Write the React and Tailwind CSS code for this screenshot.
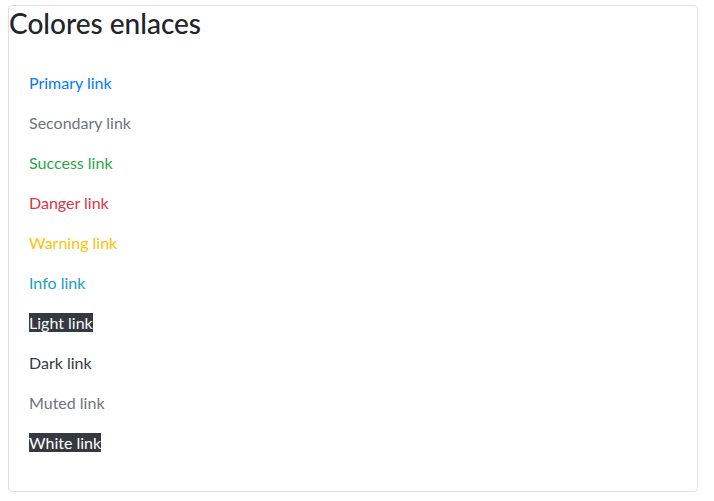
import React from 'react';

const links = [
  { label: 'Primary link', cls: 'text-[#007bff]' },
  { label: 'Secondary link', cls: 'text-[#6c757d]' },
  { label: 'Success link', cls: 'text-[#28a745]' },
  { label: 'Danger link', cls: 'text-[#dc3545]' },
  { label: 'Warning link', cls: 'text-[#ffc107]' },
  { label: 'Info link', cls: 'text-[#17a2b8]' },
  { label: 'Light link', cls: 'text-[#f8f9fa] bg-[#343a40]' },
  { label: 'Dark link', cls: 'text-[#343a40]' },
  { label: 'Muted link', cls: 'text-[#6c757d]' },
  { label: 'White link', cls: 'text-white bg-[#343a40]' },
];

export default function App() {
  return (
    <div className="min-h-[501px] bg-white pl-2 pr-4 pt-[5px] font-['Segoe_UI','Lato','Liberation_Sans',sans-serif]">
      <div className="border border-[#dfdfdf] rounded-[4px]">
        <h3 className="text-[28px] leading-[34px] font-medium text-[#212529] mb-[11px]">
          Colores enlaces
        </h3>
        <div className="p-5">
          {links.map((l) => (
            <p key={l.label} className="mb-4 text-base leading-6">
              <a href="#" className={l.cls}>{l.label}</a>
            </p>
          ))}
        </div>
      </div>
    </div>
  );
}
